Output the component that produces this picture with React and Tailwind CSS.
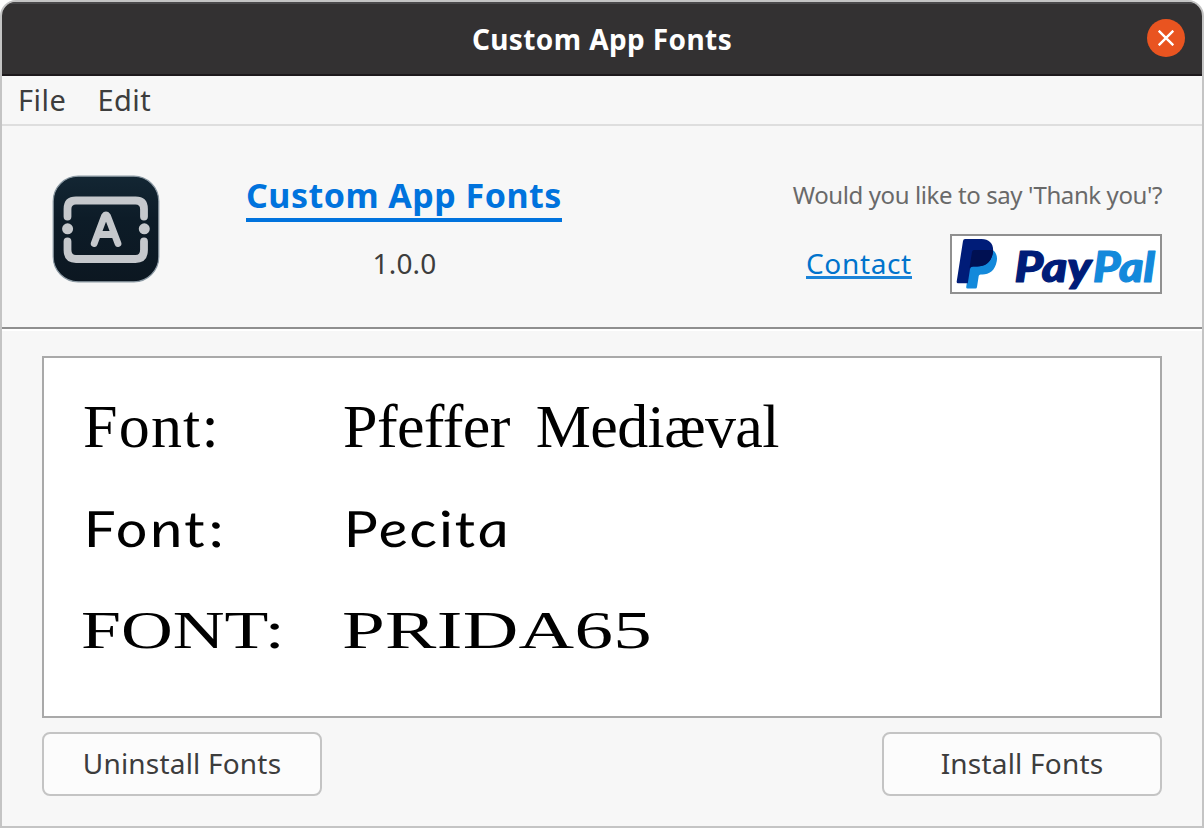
function AppLogo() {
  return (
    <svg viewBox="0 0 108 108" className="h-[108px] w-[108px]" fill="none">
      <defs>
        <linearGradient id="tile" x1="0" y1="0" x2="0" y2="1">
          <stop offset="0" stopColor="#132633" />
          <stop offset="0.4" stopColor="#0d1c28" />
          <stop offset="1" stopColor="#0c1721" />
        </linearGradient>
      </defs>
      <rect x="1.2" y="1.2" width="105.6" height="105.6" rx="25" fill="url(#tile)" stroke="#8b99a3" strokeWidth="1.2" />
      <g stroke="#c5c8cc" strokeLinecap="round" strokeLinejoin="round">
        <path d="M15.5 41.500V34Q15.500 25.500 24 25.500H83.500Q92 25.500 92 34V41.500" strokeWidth="7.800" />
        <path d="M15.500 66.500V75Q15.500 84 24 84H83.500Q92 84 92 75V66.500" strokeWidth="7.800" />
        <path d="M42.200 68.500L52.500 41Q54 39 55.500 41L66 68.500M47 59.500H61" strokeWidth="6.800" />
      </g>
      <circle cx="15.600" cy="53.800" r="5.500" fill="#c5c8cc" />
      <circle cx="92.300" cy="53.800" r="5.500" fill="#c5c8cc" />
    </svg>
  );
}

function PayPalLogo() {
  return (
    <svg viewBox="0 0 208 56" className="h-[56px] w-[208px]">
      <path d="M20 14H40.500C44 16 45.600 20 44.800 25C43 35 37 38.500 30.500 38.500H28.500Q27 38.500 26.700 40L25 51Q24.800 52.500 23.500 52.500H15.500Q14 52.500 14.200 51Z" fill="#1389db" />
      <path d="M13 3H29.500C37.500 3 42 8 41 16C39.500 26.500 33 30.500 25 30.500H21Q18.500 30.500 18 33L15.800 47.200H6Q4.500 47.200 4.700 45.500L11 5Q11.300 3 13 3Z" fill="#001c78" />
      <path d="M22 14H40.800Q41.300 15 41 16.500C39.500 26.500 33 30.500 25 30.500H21Q18.500 30.500 17.500 32L20 16Q20.300 14 22 14Z" fill="#001052" />
      <g fontFamily="Lato, sans-serif" fontWeight="900" fontStyle="italic" fontSize="42" strokeWidth="1.200" strokeLinejoin="round">
        <text x="62.500" y="45.500" textLength="77" lengthAdjust="spacingAndGlyphs" fill="#001c78" stroke="#001c78">Pay</text>
        <text x="141" y="45.500" textLength="62" lengthAdjust="spacingAndGlyphs" fill="#1389db" stroke="#1389db">Pal</text>
      </g>
    </svg>
  );
}

function PushButton({ children }) {
  return (
    <button className="flex h-[64px] w-[280px] items-center justify-center rounded-[8px] border-2 border-[#c4c4c4] bg-[#fcfcfc] pb-[2px] text-[28px] tracking-[0.2px] whitespace-nowrap">
      {children}
    </button>
  );
}

function FontRow({ children }) {
  return <div className="flex h-[100px] items-center whitespace-nowrap">{children}</div>;
}

export default function App() {
  return (
    <div className="h-[828px] w-[1204px] overflow-hidden bg-white font-['Noto_Sans',sans-serif] text-[#3d3d3d]">
      <div className="flex h-full flex-col overflow-hidden rounded-t-[16px] border-2 border-[#c4c4c4] bg-[#f7f7f7]">
        <header className="grid h-[74px] shrink-0 grid-cols-[1fr_auto_1fr] items-center border-t-2 border-b-2 border-t-[#4a494b] border-b-[#1d191c] bg-[#333132] text-white">
          <span />
          <h1 className="text-[28px] font-bold tracking-[0.4px]">Custom App Fonts</h1>
          <button className="mr-[17px] mb-[2px] flex h-[38px] w-[38px] items-center justify-center justify-self-end rounded-full bg-[#e95420]" aria-label="Close">
            <svg viewBox="0 0 16 16" className="h-[16px] w-[16px]" stroke="white" strokeWidth="2.400">
              <path d="M0.700 0.700L15.300 15.300M15.300 0.700L0.700 15.300" />
            </svg>
          </button>
        </header>

        <nav className="flex h-[50px] shrink-0 items-center gap-[31px] border-b-2 border-[#dedede] pl-[16px] text-[29px] tracking-[0.500px]">
          <span>File</span>
          <span>Edit</span>
        </nav>

        <section className="flex h-[205px] shrink-0 border-b-2 border-white pr-[40px] pl-[50px]">
          <div className="pt-[49px]"><AppLogo /></div>
          <div className="ml-[86px] flex w-[316px] flex-col items-center pt-[46px]">
            <a className="h-[50px] w-[316px] border-b-4 border-[#0073dd] text-[34px] leading-[46px] font-bold tracking-[0.480px] whitespace-nowrap text-[#0073dd]">Custom App Fonts</a>
            <span className="mt-[21px] pl-[1px] text-[28px] leading-[40px] tracking-[0.200px]">1.0.0</span>
          </div>
          <div className="ml-auto flex flex-col items-end pt-[52px]">
            <span className="h-[34px] text-[24px] leading-[34px] tracking-[-0.400px] whitespace-nowrap text-[#696969]">Would you like to say 'Thank you'?</span>
            <div className="mt-[22px] flex items-start gap-[38px]">
              <a className="mt-[8px] h-[37px] w-[106px] border-b-[3px] border-[#1a83d8] text-[28px] leading-[42px] tracking-[0.650px] text-[#0073cc]">Contact</a>
              <a className="h-[60px] w-[212px] border-2 border-[#909090] bg-white"><PayPalLogo /></a>
            </div>
          </div>
        </section>
        <div className="-mt-[4px] h-[2px] shrink-0 bg-[#8f8f8f]" />
        <div className="h-[2px] shrink-0 bg-white" />

        <main className="mt-[25px] h-[362px] shrink-0 px-[40px]">
          <div className="h-full border-2 border-[#a9a9a9] bg-white px-[39px] pt-[18px] text-black">
            <FontRow>
              <span className="w-[260px] font-['Liberation_Serif',serif] text-[62px] tracking-[1.200px]">Font:</span>
              <span className="font-['Liberation_Serif',serif] text-[62px] tracking-[-0.600px] [word-spacing:11px]">Pfeffer Mediæval</span>
            </FontRow>
            <FontRow>
              <span className="w-[260px] origin-left scale-x-122 skew-x-[7deg] pt-[4px] font-['Lato',sans-serif] text-[50px] tracking-[2px] italic">Font:</span>
              <span className="origin-left scale-x-122 skew-x-[7deg] pt-[4px] font-['Lato',sans-serif] text-[50px] tracking-[1.500px] italic">Pecita</span>
            </FontRow>
            <FontRow>
              <span className="w-[260px] origin-left -translate-x-[2px] scale-x-138 pt-[9px] font-['Liberation_Serif',serif] text-[52px]">FONT:</span>
              <span className="origin-left -translate-x-[1px] scale-x-148 pt-[9px] font-['Liberation_Serif',serif] text-[52px] tracking-[0.200px]">PRIDA65</span>
            </FontRow>
          </div>
        </main>

        <footer className="mt-[14px] flex justify-between px-[40px]">
          <PushButton>Uninstall Fonts</PushButton>
          <PushButton>Install Fonts</PushButton>
        </footer>
      </div>
    </div>
  );
}
